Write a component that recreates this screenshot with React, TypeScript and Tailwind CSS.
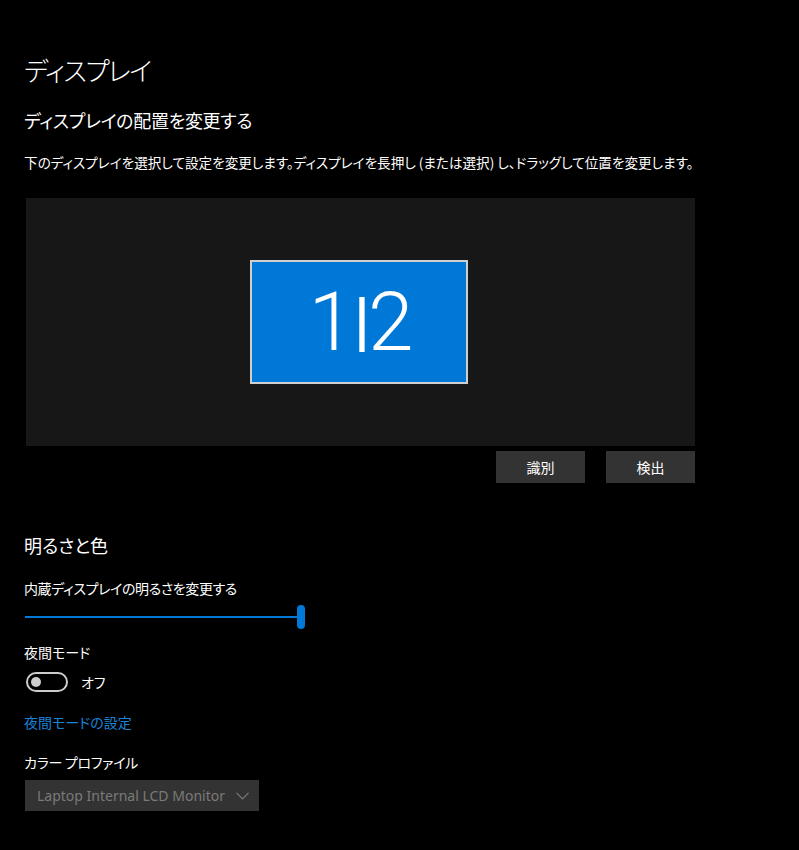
import React, { useState } from "react";

const jp = "font-['Noto_Sans_CJK_JP','Noto_Sans',sans-serif] [font-feature-settings:'palt']";

const App: React.FC = () => {
    const [brightness] = useState(100);
    const [nightMode, setNightMode] = useState(false);

    return (
        <div className={`min-h-[850px] w-[799px] bg-black text-white pl-6 pt-[50px] ${jp}`}>
            {/* Header */}
            <h1 className="text-[26px] leading-[40px] font-light tracking-[-1.5px]">ディスプレイ</h1>
            <h2 className="mt-[15px] text-[18px] leading-[30px] tracking-[-0.3px]">ディスプレイの配置を変更する</h2>
            <p className="mt-[17px] text-[13.6px] leading-[20px]">
                下のディスプレイを選択して設定を変更します。ディスプレイを長押し (または選択) し、ドラッグして位置を変更します。
            </p>

            {/* Arrangement canvas */}
            <div className="relative mt-[26px] ml-[2px] h-[248px] w-[669px] bg-[#171717]">
                <div className="absolute left-[224px] top-[62px] flex h-[124px] w-[218px] items-center justify-center border-2 border-[#cfcfcf] bg-[#0078d7]">
                    <span className="flex items-center font-['Roboto',sans-serif] text-[82px] font-light leading-none tracking-[-4px]">
                        <span>1</span>
                        <span className="inline-block scale-x-[1.3] scale-y-[0.8] -translate-y-[1px] px-[2px]">|</span>
                        <span>2</span>
                    </span>
                </div>
            </div>
            <div className="mt-[5px] flex w-[671px] justify-end gap-[21px]">
                <button className="h-[32px] w-[89px] bg-[#333333] text-[14px] text-white">識別</button>
                <button className="h-[32px] w-[89px] bg-[#333333] text-[14px] text-white">検出</button>
            </div>

            {/* Brightness and colour */}
            <h3 className="mt-[48px] text-[18px] leading-[28px]">明るさと色</h3>
            <div className="mt-[19px] text-[14px] leading-[20px] tracking-[-0.4px]">内蔵ディスプレイの明るさを変更する</div>
            <div className="relative mt-[7px] ml-px h-[24px] w-[280px]">
                <div className="absolute left-0 top-[11px] h-[2px] bg-[#0078d7]" style={{ width: `${(brightness / 100) * 276}px` }} />
                <div className="absolute top-0 h-[24px] w-[8px] rounded-full bg-[#0078d7]" style={{ left: `${(brightness / 100) * 272}px` }} />
            </div>

            <div className="mt-[13px] text-[14px] leading-[20px]">夜間モード</div>
            <div className="mt-[10px] ml-[2px] flex h-[20px] items-center gap-[13px]">
                <button
                    onClick={() => setNightMode(!nightMode)}
                    className="flex h-[20px] w-[42px] items-center rounded-full border-2 border-[#cccccc] px-[3px]"
                >
                    <span className="h-[10px] w-[10px] rounded-full bg-[#cccccc]" />
                </button>
                <span className="text-[14px] leading-[20px]">{nightMode ? "オン" : "オフ"}</span>
            </div>

            <a className="mt-[20px] block text-[14px] leading-[20px] text-[#1a84d8]">夜間モードの設定</a>

            <div className="mt-[20px] text-[14px] leading-[20px] tracking-[-0.3px]">カラー プロファイル</div>
            <div className="mt-[8px] ml-px flex h-[31px] w-[234px] items-center justify-between bg-[#333333] pl-[12px] pr-[10px]">
                <span className="font-['Noto_Sans',sans-serif] text-[14px] text-[#7a7a7a]">Laptop Internal LCD Monitor</span>
                <svg width="13" height="8" viewBox="0 0 13 8" fill="none" stroke="#7a7a7a" strokeWidth="1.2">
                    <path d="M0.5 0.8 L6.5 6.8 L12.5 0.8" />
                </svg>
            </div>
        </div>
    );
};

export default App;
